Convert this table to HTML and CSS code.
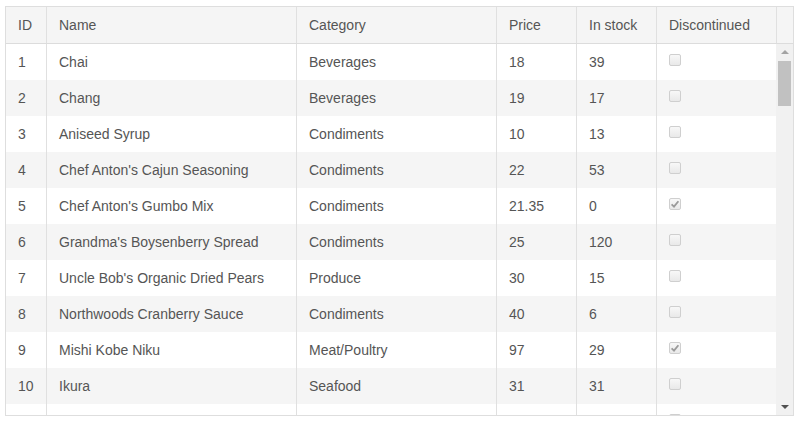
FILE: index.html
```html
<!DOCTYPE html>
<html lang="en">
<head>
<meta charset="utf-8">
<title>Products grid</title>
<link rel="stylesheet" href="styles.css">
</head>
<body>
<div class="grid">
  <div class="row head">
    <div class="cell">ID</div>
    <div class="cell">Name</div>
    <div class="cell">Category</div>
    <div class="cell">Price</div>
    <div class="cell">In stock</div>
    <div class="cell">Discontinued</div>
    <div class="cell filler"></div>
  </div>
  <div class="body">
    <div class="rows">
      <div class="row"><div class="cell">1</div><div class="cell">Chai</div><div class="cell">Beverages</div><div class="cell">18</div><div class="cell">39</div><div class="cell"><span class="cb"></span></div></div>
      <div class="row alt"><div class="cell">2</div><div class="cell">Chang</div><div class="cell">Beverages</div><div class="cell">19</div><div class="cell">17</div><div class="cell"><span class="cb"></span></div></div>
      <div class="row"><div class="cell">3</div><div class="cell">Aniseed Syrup</div><div class="cell">Condiments</div><div class="cell">10</div><div class="cell">13</div><div class="cell"><span class="cb"></span></div></div>
      <div class="row alt"><div class="cell">4</div><div class="cell">Chef Anton's Cajun Seasoning</div><div class="cell">Condiments</div><div class="cell">22</div><div class="cell">53</div><div class="cell"><span class="cb"></span></div></div>
      <div class="row"><div class="cell">5</div><div class="cell">Chef Anton's Gumbo Mix</div><div class="cell">Condiments</div><div class="cell">21.35</div><div class="cell">0</div><div class="cell"><span class="cb checked"><svg viewBox="0 0 12 12" width="12" height="12"><path d="M2.6 6.4 L5 8.6 L9.4 3.2" fill="none" stroke="#9a9a9a" stroke-width="1.8"/></svg></span></div></div>
      <div class="row alt"><div class="cell">6</div><div class="cell">Grandma's Boysenberry Spread</div><div class="cell">Condiments</div><div class="cell">25</div><div class="cell">120</div><div class="cell"><span class="cb"></span></div></div>
      <div class="row"><div class="cell">7</div><div class="cell">Uncle Bob's Organic Dried Pears</div><div class="cell">Produce</div><div class="cell">30</div><div class="cell">15</div><div class="cell"><span class="cb"></span></div></div>
      <div class="row alt"><div class="cell">8</div><div class="cell">Northwoods Cranberry Sauce</div><div class="cell">Condiments</div><div class="cell">40</div><div class="cell">6</div><div class="cell"><span class="cb"></span></div></div>
      <div class="row"><div class="cell">9</div><div class="cell">Mishi Kobe Niku</div><div class="cell">Meat/Poultry</div><div class="cell">97</div><div class="cell">29</div><div class="cell"><span class="cb checked"><svg viewBox="0 0 12 12" width="12" height="12"><path d="M2.6 6.4 L5 8.6 L9.4 3.2" fill="none" stroke="#9a9a9a" stroke-width="1.8"/></svg></span></div></div>
      <div class="row alt"><div class="cell">10</div><div class="cell">Ikura</div><div class="cell">Seafood</div><div class="cell">31</div><div class="cell">31</div><div class="cell"><span class="cb"></span></div></div>
      <div class="row"><div class="cell"></div><div class="cell"></div><div class="cell"></div><div class="cell"></div><div class="cell"></div><div class="cell"><span class="cb"></span></div></div>
    </div>
    <div class="scrollbar">
      <div class="arrow up"></div>
      <div class="track"><div class="thumb"></div></div>
      <div class="arrow down"></div>
    </div>
  </div>
</div>
</body>
</html>
```

FILE: styles.css
```css
html, body {
  margin: 0;
  padding: 0;
  background: #ffffff;
}

body {
  font-family: "Liberation Sans", Arial, sans-serif;
  font-size: 14px;
  color: #555555;
}

.grid {
  box-sizing: border-box;
  width: 789px;
  height: 410px;
  margin: 6px 0 0 5px;
  border: 1px solid #dedede;
  display: flex;
  flex-direction: column;
  overflow: hidden;
}

.row {
  display: grid;
  grid-template-columns: 40px 250px 200px 80px 80px 120px;
  height: 36px;
  background: #ffffff;
}

.row.alt {
  background: #f5f5f5;
}

.row.head {
  grid-template-columns: 40px 250px 200px 80px 80px 120px 17px;
  height: 37px;
  flex: none;
  box-sizing: border-box;
  border-bottom: 1px solid #dcdcdc;
  background: #f5f5f5;
}

.cell {
  box-sizing: border-box;
  padding: 0 12px;
  line-height: 36px;
  white-space: nowrap;
  overflow: hidden;
  border-left: 1px solid #e0e0e0;
}

.cell:first-child {
  border-left: none;
}

.cell.filler {
  padding: 0;
}

.body {
  display: flex;
  flex: 1;
  min-height: 0;
}

.rows {
  width: 770px;
  overflow: hidden;
}

.cb {
  display: inline-block;
  box-sizing: border-box;
  width: 12px;
  height: 12px;
  margin-top: 10px;
  vertical-align: top;
  border: 1px solid #cfcfcf;
  border-radius: 2px;
  background: linear-gradient(#f8f8f8, #e9e9e9);
  position: relative;
}

.cb svg {
  position: absolute;
  left: -1px;
  top: -1px;
}

.scrollbar {
  width: 17px;
  flex: none;
  background: #f1f1f1;
  display: flex;
  flex-direction: column;
}

.arrow {
  height: 17px;
  flex: none;
  position: relative;
}

.arrow::after {
  content: "";
  position: absolute;
  left: 5px;
  width: 0;
  height: 0;
  border-left: 4px solid transparent;
  border-right: 4px solid transparent;
}

.arrow.up::after {
  top: 6px;
  border-bottom: 4px solid #a3a3a3;
}

.arrow.down::after {
  top: 7px;
  border-top: 4px solid #505050;
}

.track {
  flex: 1;
  padding: 0 2px;
}

.thumb {
  height: 45px;
  background: #c1c1c1;
}
```
